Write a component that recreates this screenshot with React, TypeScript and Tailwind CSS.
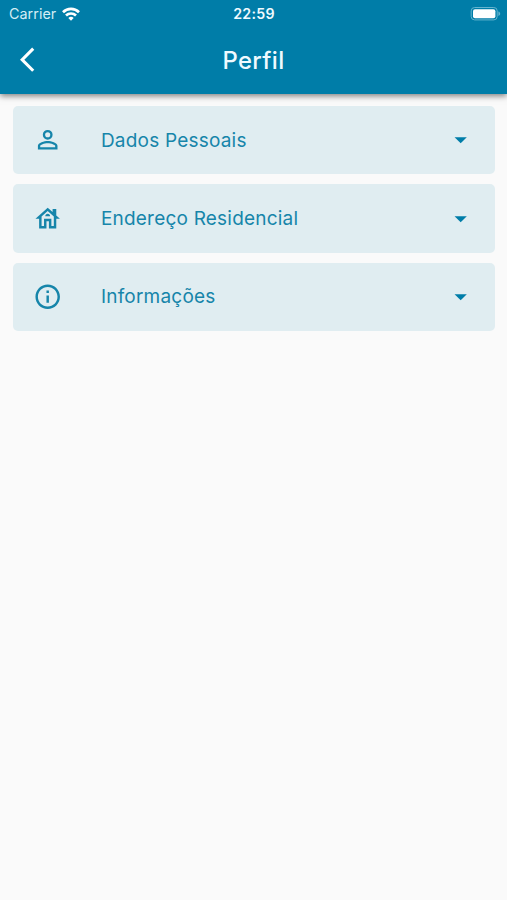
import type { ReactNode } from "react";

function Icon({ children }: { children: ReactNode }) {
  return (
    <svg viewBox="0 0 24 24" className="size-[29.4px] shrink-0" fill="currentColor">
      {children}
    </svg>
  );
}

const sections = [
  {
    title: "Dados Pessoais",
    icon: (
      <path d="M12 5.9a2.1 2.1 0 1 1 0 4.2 2.1 2.1 0 0 1 0-4.2m0 9c2.97 0 6.1 1.46 6.1 2.1v1.1H5.9V17c0-.64 3.13-2.1 6.1-2.1M12 4a4 4 0 1 0 0 8 4 4 0 0 0 0-8zm0 9c-2.67 0-8 1.34-8 4v3h16v-3c0-2.66-5.33-4-8-4z" />
    ),
  },
  {
    title: "Endereço Residencial",
    icon: (
      <>
        <path d="M19 9.3V4h-3v2.6L12 3 2 12h3v8h6v-6h2v6h6v-8h3l-3-2.7zM17 18h-2v-6H9v6H7v-7.81l5-4.5 5 4.5V18z" />
        <path d="M10 10h4c0-1.1-.9-2-2-2s-2 .9-2 2z" />
      </>
    ),
  },
  {
    title: "Informações",
    icon: (
      <path d="M11 7h2v2h-2V7zm0 4h2v6h-2v-6zm1-9C6.48 2 2 6.48 2 12s4.48 10 10 10 10-4.48 10-10S17.52 2 12 2zm0 18c-4.41 0-8-3.59-8-8s3.59-8 8-8 8 3.59 8 8-3.59 8-8 8z" />
    ),
  },
];

function StatusBar() {
  return (
    <div className="grid h-[27px] grid-cols-3 items-center pl-[9px] pr-[6px]">
      <div className="flex items-center gap-[5.5px]">
        <span className="text-[14.3px] tracking-[0.05px] text-[#d4edf5]">Carrier</span>
        <svg viewBox="0 0 18 14" className="h-[14px] w-[18px]" fill="none" stroke="white" strokeWidth="2.7">
          <path d="M1 5.2a11.5 11.5 0 0 1 16 0" />
          <path d="M4 8.5a7.2 7.2 0 0 1 10 0" />
          <path d="M9 13.7 6.3 11a3.9 3.9 0 0 1 5.4 0Z" fill="white" stroke="none" />
        </svg>
      </div>
      <span className="pr-[2px] text-center text-[14.2px] font-semibold tracking-[0.3px] text-[#effaff]">22:59</span>
      <svg viewBox="0 0 31 14" className="h-[14px] w-[31px] justify-self-end">
        <rect x="1.2" y=".5" width="26" height="12.4" rx="3.4" fill="none" stroke="#65b4ce" strokeWidth="1" />
        <rect x="3" y="2.2" width="22.4" height="9" rx="2" fill="white" />
        <path d="M28.4 4.5c2.4.7 2.4 3.7 0 4.4Z" fill="#65b4ce" />
      </svg>
    </div>
  );
}

export default function App() {
  return (
    <div className="min-h-screen w-full bg-[#fafafa] font-['Inter','Liberation_Sans',sans-serif]">
      <header className="h-[94px] bg-[#007da8] shadow-[0_2px_6px_rgba(0,0,0,0.5)]">
        <StatusBar />
        <div className="grid h-[66px] grid-cols-[60px_1fr_60px] items-center">
          <button aria-label="Voltar" className="pl-[20px] text-white">
            <Icon>
              <path d="M11.67 3.87 9.9 2.1 0 12l9.9 9.9 1.77-1.77L3.54 12z" />
            </Icon>
          </button>
          <h1 className="pt-[1.5px] text-center text-[23.8px] font-medium tracking-[0.4px] text-[#effaff]">Perfil</h1>
        </div>
      </header>
      <main className="flex flex-col gap-[10px] pl-[13px] pr-[12.5px] pt-[12px]">
        {sections.map((section) => (
          <button
            key={section.title}
            className="flex h-[68.3px] items-center rounded-[5px] bg-[#e0edf1] px-[19.5px] text-left text-[#1685aa]"
          >
            <Icon>{section.icon}</Icon>
            <span className="ml-[39px] flex-1 pt-[2px] text-[19px] tracking-[0.21px]">{section.title}</span>
            <span className="text-[#007da8]">
              <Icon>
                <path d="m7 10 5 5 5-5z" />
              </Icon>
            </span>
          </button>
        ))}
      </main>
    </div>
  );
}
